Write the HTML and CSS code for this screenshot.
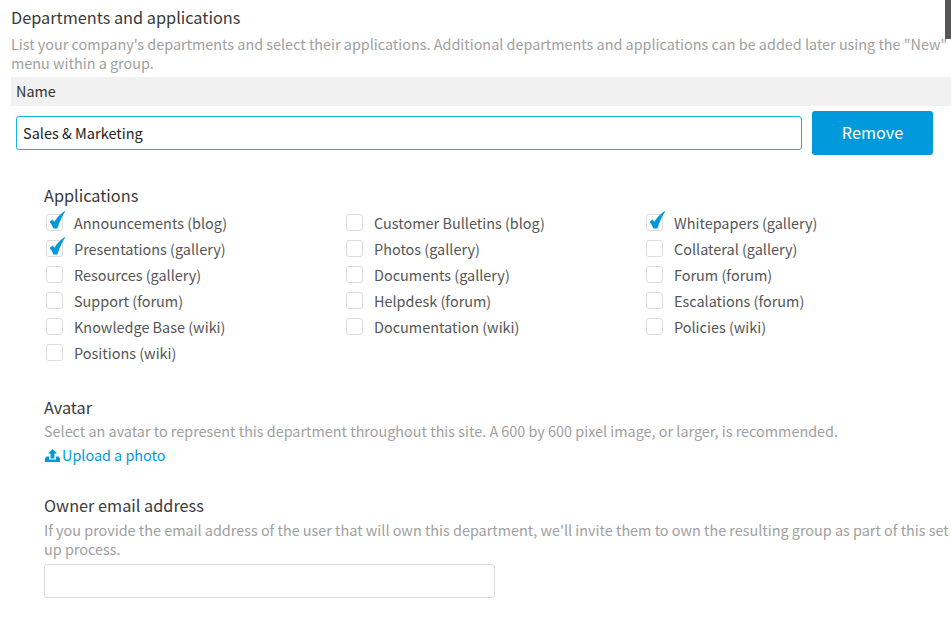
FILE: index.html
```html
<!DOCTYPE html>
<html lang="en">
<head>
<meta charset="utf-8">
<title>Departments and applications</title>
<link rel="stylesheet" href="styles.css">
</head>
<body>
<div class="scroll-thumb"></div>
<main class="page">
  <header class="intro">
    <h1 class="title">Departments and applications</h1>
    <p class="desc">List your company's departments and select their applications. Additional departments and applications can be added later using the "New" menu within a group.</p>
  </header>
  <div class="name-head">Name</div>
  <div class="name-row">
    <input class="name-input" type="text" value="Sales &amp; Marketing">
    <a class="remove">Remove</a>
  </div>
  <section class="apps">
    <h2 class="label">Applications</h2>
    <div class="app-grid">
      <div class="app"><span class="box"><svg class="tick" viewBox="0 0 17 19"><path d="M.6 12 L3.5 9.4 L5.4 11.8 C8 7.5 12 3.5 16.8 .6 C13 6.5 10.5 12 8.4 18.4 L4.4 18.4 C3.5 15.8 2.2 13.8 .6 12Z"/></svg></span>Announcements (blog)</div>
      <div class="app"><span class="box"></span>Customer Bulletins (blog)</div>
      <div class="app"><span class="box"><svg class="tick" viewBox="0 0 17 19"><path d="M.6 12 L3.5 9.4 L5.4 11.8 C8 7.5 12 3.5 16.8 .6 C13 6.5 10.5 12 8.4 18.4 L4.4 18.4 C3.5 15.8 2.2 13.8 .6 12Z"/></svg></span>Whitepapers (gallery)</div>
      <div class="app"><span class="box"><svg class="tick" viewBox="0 0 17 19"><path d="M.6 12 L3.5 9.4 L5.4 11.8 C8 7.5 12 3.5 16.8 .6 C13 6.5 10.5 12 8.4 18.4 L4.4 18.4 C3.5 15.8 2.2 13.8 .6 12Z"/></svg></span>Presentations (gallery)</div>
      <div class="app"><span class="box"></span>Photos (gallery)</div>
      <div class="app"><span class="box"></span>Collateral (gallery)</div>
      <div class="app"><span class="box"></span>Resources (gallery)</div>
      <div class="app"><span class="box"></span>Documents (gallery)</div>
      <div class="app"><span class="box"></span>Forum (forum)</div>
      <div class="app"><span class="box"></span>Support (forum)</div>
      <div class="app"><span class="box"></span>Helpdesk (forum)</div>
      <div class="app"><span class="box"></span>Escalations (forum)</div>
      <div class="app"><span class="box"></span>Knowledge Base (wiki)</div>
      <div class="app"><span class="box"></span>Documentation (wiki)</div>
      <div class="app"><span class="box"></span>Policies (wiki)</div>
      <div class="app"><span class="box"></span>Positions (wiki)</div>
    </div>
  </section>
  <section class="avatar">
    <h2 class="label">Avatar</h2>
    <p class="desc">Select an avatar to represent this department throughout this site. A 600 by 600 pixel image, or larger, is recommended.</p>
    <a class="upload"><svg class="upload-icon" viewBox="0 0 15 13"><path d="M7.5 0 L12 4.6 H9.4 V9.4 H5.6 V4.6 H3Z"/><path d="M1.5 7.4 H4 V10.4 H11 V7.4 H13.5 L15 9.4 V13 H0 V9.4Z"/></svg>Upload a photo</a>
  </section>
  <section class="owner">
    <h2 class="label">Owner email address</h2>
    <p class="desc">If you provide the email address of the user that will own this department, we'll invite them to own the resulting group as part of this set up process.</p>
    <input class="email-input" type="text">
  </section>
</main>
</body>
</html>
```
FILE: styles.css
```css
html, body {
  margin: 0;
  padding: 0;
  background: #fff;
  height: 620px;
  overflow: hidden;
}
body {
  font-family: "Noto Sans CJK SC", "Noto Sans", sans-serif;
  font-size: 14.4px;
  color: #333;
}
.scroll-thumb {
  position: absolute;
  top: 0;
  right: 0;
  width: 6px;
  height: 39px;
  background: #555;
}
.page {
  padding: 6px 0 0 11px;
}
.title {
  margin: 0;
  font-size: 16.3px;
  font-weight: 400;
  line-height: 22px;
  color: #3a3a3a;
}
.desc {
  margin: 0;
  font-size: 14.4px;
  line-height: 19px;
  color: #a0a0a0;
}
.intro .desc {
  margin-top: 6px;
  margin-bottom: 5px;
}
.name-head {
  height: 29px;
  line-height: 27px;
  padding-left: 5px;
  background: #f1f1f1;
  font-size: 14.4px;
}
.name-row {
  display: flex;
  align-items: center;
  gap: 10px;
  padding: 5px 0 0 5px;
}
.name-input {
  box-sizing: border-box;
  width: 786px;
  height: 34px;
  padding: 0 6px 2px;
  border: 1px solid #14b0f0;
  border-radius: 3px;
  outline: none;
  font: 400 14.5px/30px "Noto Sans CJK SC", "Noto Sans", sans-serif;
  color: #222;
}
.remove {
  box-sizing: border-box;
  width: 121px;
  height: 44px;
  line-height: 42px;
  text-align: center;
  background: #0099dc;
  border-radius: 3px;
  color: #fff;
  font-size: 16.3px;
}
.apps {
  margin: 29px 0 0 33px;
}
.label {
  margin: 0;
  font-size: 16.3px;
  font-weight: 400;
  line-height: 22px;
  color: #3a3a3a;
}
.app-grid {
  display: grid;
  grid-template-columns: repeat(3, 300px);
  grid-auto-rows: 26px;
  margin-top: 3px;
}
.app {
  display: flex;
  align-items: center;
  font-size: 14.45px;
  color: #555;
}
.box {
  position: relative;
  box-sizing: border-box;
  flex: none;
  width: 17px;
  height: 17px;
  margin: 0 11px 0 2px;
  border: 1px solid #dcdcdc;
  border-radius: 3px;
  background: #fff;
}
.tick {
  position: absolute;
  left: 2px;
  top: -5px;
  width: 17px;
  height: 19px;
  fill: #0099dc;
}
.avatar {
  margin: 31px 0 0 33px;
}
.avatar .desc {
  margin-top: 3px;
}
.upload {
  display: flex;
  align-items: center;
  margin-top: 5px;
  line-height: 20px;
  font-size: 14.4px;
  color: #0099dc;
}
.upload-icon {
  width: 15px;
  height: 13px;
  margin: 1px 2px 0 1px;
  fill: #0099dc;
}
.owner {
  margin: 29px 0 0 33px;
}
.owner .desc {
  margin-top: 4px;
}
.email-input {
  display: block;
  box-sizing: border-box;
  width: 451px;
  height: 34px;
  margin-top: 6px;
  border: 1px solid #d9d9d9;
  border-radius: 3px;
  outline: none;
  background: #fff;
}
```
